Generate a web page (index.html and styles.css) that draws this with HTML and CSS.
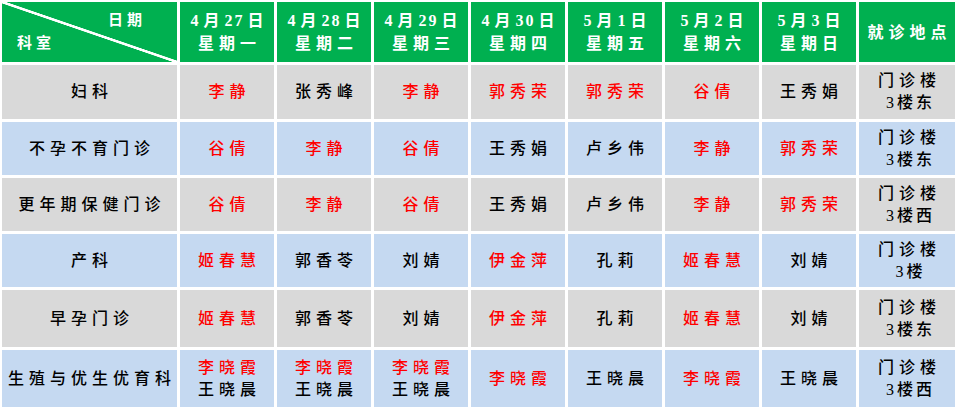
FILE: index.html
```html
<!DOCTYPE html>
<html lang="zh-CN">
<head>
<meta charset="utf-8">
<title>门诊排班表</title>
<link rel="stylesheet" href="styles.css">
</head>
<body>
<div class="table">
  <div class="cell head corner">
    <span class="c-top">日期</span>
    <span class="c-bot">科室</span>
  </div>
  <div class="cell head"><span><span class="n">4</span>月<span class="n">27</span>日</span><span>星期一</span></div>
  <div class="cell head"><span><span class="n">4</span>月<span class="n">28</span>日</span><span>星期二</span></div>
  <div class="cell head"><span><span class="n">4</span>月<span class="n">29</span>日</span><span>星期三</span></div>
  <div class="cell head"><span><span class="n">4</span>月<span class="n">30</span>日</span><span>星期四</span></div>
  <div class="cell head"><span><span class="n">5</span>月<span class="n">1</span>日</span><span>星期五</span></div>
  <div class="cell head"><span><span class="n">5</span>月<span class="n">2</span>日</span><span>星期六</span></div>
  <div class="cell head"><span><span class="n">5</span>月<span class="n">3</span>日</span><span>星期日</span></div>
  <div class="cell head"><span>就诊地点</span></div>

  <div class="cell gray">妇科</div>
  <div class="cell gray red">李静</div>
  <div class="cell gray">张秀峰</div>
  <div class="cell gray red">李静</div>
  <div class="cell gray red">郭秀荣</div>
  <div class="cell gray red">郭秀荣</div>
  <div class="cell gray red">谷倩</div>
  <div class="cell gray">王秀娟</div>
  <div class="cell gray"><span>门诊楼</span><span class="floor">3楼东</span></div>

  <div class="cell blue">不孕不育门诊</div>
  <div class="cell blue red">谷倩</div>
  <div class="cell blue red">李静</div>
  <div class="cell blue red">谷倩</div>
  <div class="cell blue">王秀娟</div>
  <div class="cell blue">卢乡伟</div>
  <div class="cell blue red">李静</div>
  <div class="cell blue red">郭秀荣</div>
  <div class="cell blue"><span>门诊楼</span><span class="floor">3楼东</span></div>

  <div class="cell gray">更年期保健门诊</div>
  <div class="cell gray red">谷倩</div>
  <div class="cell gray red">李静</div>
  <div class="cell gray red">谷倩</div>
  <div class="cell gray">王秀娟</div>
  <div class="cell gray">卢乡伟</div>
  <div class="cell gray red">李静</div>
  <div class="cell gray red">郭秀荣</div>
  <div class="cell gray"><span>门诊楼</span><span class="floor">3楼西</span></div>

  <div class="cell blue">产科</div>
  <div class="cell blue red">姬春慧</div>
  <div class="cell blue">郭香苓</div>
  <div class="cell blue">刘婧</div>
  <div class="cell blue red">伊金萍</div>
  <div class="cell blue">孔莉</div>
  <div class="cell blue red">姬春慧</div>
  <div class="cell blue">刘婧</div>
  <div class="cell blue"><span>门诊楼</span><span class="floor">3楼</span></div>

  <div class="cell gray">早孕门诊</div>
  <div class="cell gray red">姬春慧</div>
  <div class="cell gray">郭香苓</div>
  <div class="cell gray">刘婧</div>
  <div class="cell gray red">伊金萍</div>
  <div class="cell gray">孔莉</div>
  <div class="cell gray red">姬春慧</div>
  <div class="cell gray">刘婧</div>
  <div class="cell gray"><span>门诊楼</span><span class="floor">3楼东</span></div>

  <div class="cell blue">生殖与优生优育科</div>
  <div class="cell blue"><span class="red">李晓霞</span><span>王晓晨</span></div>
  <div class="cell blue"><span class="red">李晓霞</span><span>王晓晨</span></div>
  <div class="cell blue"><span class="red">李晓霞</span><span>王晓晨</span></div>
  <div class="cell blue red">李晓霞</div>
  <div class="cell blue">王晓晨</div>
  <div class="cell blue red">李晓霞</div>
  <div class="cell blue">王晓晨</div>
  <div class="cell blue"><span>门诊楼</span><span class="floor">3楼西</span></div>
</div>
</body>
</html>
```

FILE: styles.css
```css
html, body {
  margin: 0;
  padding: 0;
  background: #ffffff;
}

body {
  font-family: "Liberation Serif", "Noto Sans CJK SC", serif;
  color: #000000;
}

.table {
  display: grid;
  grid-template-columns: 175px repeat(7, 94px) 96px;
  grid-template-rows: 60px 54px 53px 53px 53px 57px 57px;
  gap: 3px;
  padding: 2px 0 0 2px;
  width: 955px;
  box-sizing: border-box;
}

.cell {
  display: flex;
  flex-direction: column;
  align-items: center;
  justify-content: center;
  font-size: 16px;
  font-weight: 500;
  line-height: 22px;
  letter-spacing: 5px;
  padding-left: 5px;
  box-sizing: border-box;
  white-space: nowrap;
}

.floor {
  letter-spacing: 3px;
  margin-right: -2px;
}

.head {
  background: #00b050;
  color: #ffffff;
  font-weight: bold;
  font-size: 16px;
  letter-spacing: 5px;
  padding-left: 5px;
  line-height: 23px;
}

.n {
  letter-spacing: 2px;
  margin-right: 3px;
}

.corner {
  align-items: stretch;
  padding: 0;
  font-size: 15px;
  letter-spacing: 4px;
  background: linear-gradient(to top right,
    #00b050 calc(50% - 1.6px),
    #ffffff calc(50% - 1px),
    #ffffff calc(50% + 1px),
    #00b050 calc(50% + 1.6px));
}

.c-top {
  text-align: right;
  padding-right: 31px;
}

.c-bot {
  text-align: left;
  padding-left: 15px;
}

.gray {
  background: #d9d9d9;
}

.blue {
  background: #c5d9f1;
}

.red {
  color: #ff0000;
}
```
